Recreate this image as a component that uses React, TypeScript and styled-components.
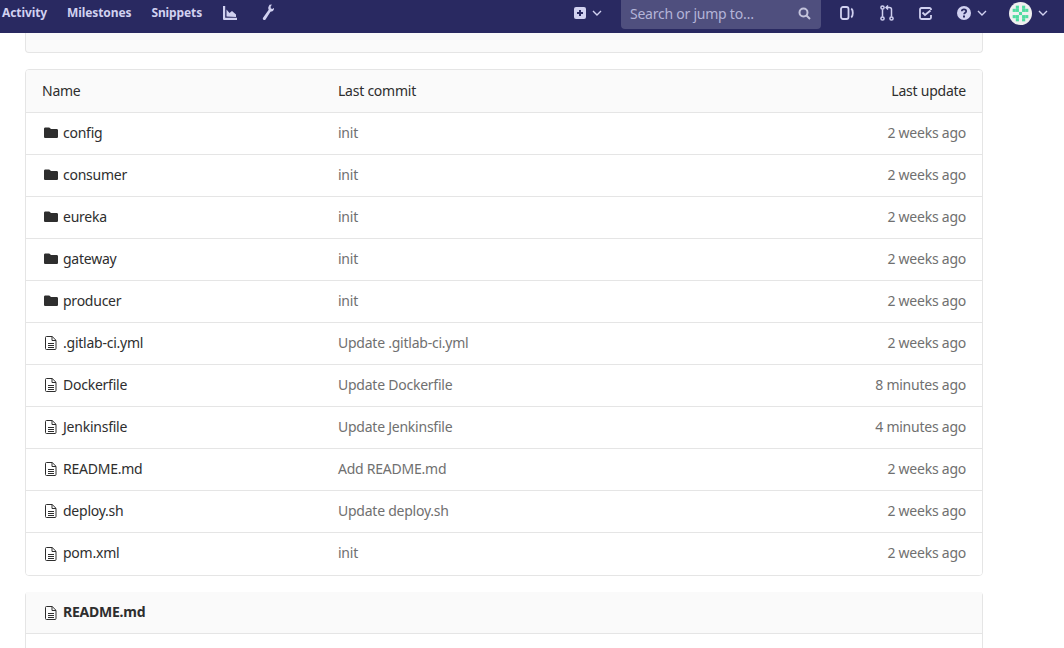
import React from "react";
import styled, { createGlobalStyle } from "styled-components";

const GlobalStyle = createGlobalStyle`
  html, body {
    margin: 0;
    padding: 0;
    background: #fff;
    overflow: hidden;
  }
  body {
    font-family: "Noto Sans", "Open Sans", sans-serif;
    font-size: 14px;
    letter-spacing: -0.24px;
    color: #2e2e2e;
  }
`;

const Page = styled.div`
  width: 1064px;
  height: 648px;
  overflow: hidden;
`;

const Navbar = styled.header`
  height: 33px;
  background: #292961;
  display: flex;
  justify-content: space-between;
  align-items: flex-start;
  padding: 0 0 0 2px;
  box-sizing: border-box;
`;

const NavGroup = styled.nav`
  display: flex;
  align-items: center;
  height: 25px;
`;

const NavLink = styled.a`
  color: #d1d1f0;
  font-size: 12px;
  font-weight: 700;
  letter-spacing: -0.1px;
  margin-right: 20px;
  line-height: 25px;
`;

const NavIcon = styled.span<{ $gap?: number; $left?: number }>`
  display: flex;
  align-items: center;
  color: #d1d1f0;
  margin-left: ${(p) => p.$left ?? 0}px;
  margin-right: ${(p) => p.$gap ?? 0}px;
`;

const RightGroup = styled.div`
  display: flex;
  align-items: flex-start;
  width: 491px;
  height: 29px;
`;

const NavRightItem = styled.div<{ $width: number; $left?: number }>`
  width: ${(p) => p.$width}px;
  height: 26px;
  padding-left: ${(p) => p.$left ?? 0}px;
  box-sizing: border-box;
  display: flex;
  align-items: center;
  color: #d1d1f0;
  gap: 6px;
`;

const Search = styled.div`
  width: 200px;
  height: 29px;
  box-sizing: border-box;
  background: #4f4f7e;
  border-radius: 0 0 4px 4px;
  display: flex;
  align-items: center;
  justify-content: space-between;
  padding: 0 10px 2px 9px;
  margin-right: 19px;
  color: #b4b4d8;
  font-size: 14px;
`;

const Content = styled.main`
  width: 958px;
  margin-left: 25px;
  display: flex;
  flex-direction: column;
`;

const TopPanel = styled.div`
  height: 20px;
  box-sizing: border-box;
  background: #fafafa;
  border: 1px solid #e5e5e5;
  border-top: 0;
  border-radius: 0 0 4px 4px;
  margin-bottom: 16px;
`;

const TreeTable = styled.div`
  border: 1px solid #e5e5e5;
  border-radius: 4px;
  overflow: hidden;
  margin-bottom: 16px;
`;

const Row = styled.div<{ $head?: boolean }>`
  display: grid;
  grid-template-columns: 296px 1fr 240px;
  align-items: center;
  height: ${(p) => (p.$head ? 43 : 42)}px;
  box-sizing: border-box;
  padding: 0 16px ${(p) => (p.$head ? 2 : 3)}px;
  background: ${(p) => (p.$head ? "#fafafa" : "#fff")};
  border-bottom: 1px solid #e5e5e5;
  &:last-child {
    border-bottom: 0;
  }
`;

const NameCell = styled.div`
  display: flex;
  align-items: center;
  gap: 5px;
  padding-left: 2px;
  color: #2e2e2e;
  svg {
    margin-top: 2px;
  }
`;

const HeadCell = styled.div<{ $right?: boolean }>`
  color: #2e2e2e;
  text-align: ${(p) => (p.$right ? "right" : "left")};
`;

const CommitCell = styled.div`
  color: #707070;
`;

const TimeCell = styled.div`
  color: #707070;
  text-align: right;
`;

const ReadmePanel = styled.section`
  border: 1px solid #e5e5e5;
  border-top: 0;
  border-bottom: 0;
  border-radius: 4px 4px 0 0;
`;

const ReadmeHead = styled.div`
  height: 42px;
  box-sizing: border-box;
  background: #fafafa;
  border-bottom: 1px solid #e5e5e5;
  display: flex;
  align-items: center;
  gap: 5px;
  padding: 0 0 2px 18px;
  font-weight: 700;
  svg {
    margin-top: 2px;
  }
`;

const ReadmeBody = styled.div`
  height: 40px;
`;

const FolderIcon = () => (
  <svg width="14" height="12" viewBox="0 0 14 12" fill="#2e2e2e">
    <path d="M1.3 0.5h3.6c.5 0 .9.2 1.2.6l.7.9h5.9c.7 0 1.3.6 1.3 1.3v6.4c0 .7-.6 1.3-1.3 1.3H1.3C.6 11 0 10.4 0 9.7V1.8C0 1.1.6.5 1.3.5z" />
  </svg>
);

const FileIcon = () => (
  <svg width="14" height="14" viewBox="0 0 14 14" fill="none" stroke="#2e2e2e">
    <path d="M1.5 1.5a1 1 0 0 1 1-1h5.700l3.800 3.800v8.200a1 1 0 0 1-1 1h-8.500a1 1 0 0 1-1-1z" strokeWidth="1" />
    <path d="M8 .8v3.700h4M4 7.500h6M4 9.500h6M4 11.500h6" strokeWidth="1" />
  </svg>
);

const ChartIcon = () => (
  <svg width="14" height="14" viewBox="0 0 14 14" fill="currentColor">
    <path d="M0 0h2.200v11.800H14V14H1a1 1 0 0 1-1-1z" />
    <path d="M3.500 10.500V3.500l3 3.500 2.500-2 4 3.500v2.500z" />
  </svg>
);

const WrenchIcon = () => (
  <svg width="13" height="17" viewBox="0 0 14 18" fill="currentColor">
    <path d="M9.200.6 8 3.200c-.4 1-.2 2 .3 2.800L2.200 14.600c-.5.8-.3 1.800.4 2.300.8.5 1.800.3 2.300-.4l5.300-8.200c1.600 0 3-.9 3.600-2.400l.6-2-2.400 1.200-1.500-.8-.1-1.700 1.400-2.200z" />
  </svg>
);

const PlusSquareIcon = () => (
  <svg width="12" height="12" viewBox="0 0 12 12">
    <rect width="12" height="12" rx="2" fill="currentColor" />
    <path d="M6 3v6M3 6h6" stroke="#292961" strokeWidth="2" />
  </svg>
);

const Chevron = () => (
  <svg width="10" height="6" viewBox="0 0 10 6" fill="none" stroke="currentColor" strokeWidth="1.4">
    <path d="M1 1l4 4 4-4" />
  </svg>
);

const SearchIcon = () => (
  <svg width="13" height="13" viewBox="0 0 13 13" fill="none" stroke="#c4c4dc" strokeWidth="2">
    <circle cx="5.500" cy="5.500" r="4" />
    <path d="M8.500 8.500l3.500 3.500" />
  </svg>
);

const SidebarIcon = () => (
  <svg width="14" height="14" viewBox="0 0 14 14" fill="none" stroke="currentColor" strokeWidth="1.8">
    <rect x="1" y="1" width="7.500" height="12" rx="2" />
    <path d="M11.300 2.500c1.100.9 1.500 2.600 1.500 4.500s-.4 3.600-1.500 4.500" />
  </svg>
);

const MergeIcon = () => (
  <svg width="14" height="16" viewBox="0 0 14 16" fill="none" stroke="currentColor" strokeWidth="1.500">
    <circle cx="2.500" cy="2.500" r="1.600" />
    <circle cx="2.500" cy="13.500" r="1.600" />
    <circle cx="11.500" cy="13.500" r="1.600" />
    <path d="M2.500 4.200v7.600M11.500 11.800V4.500a2 2 0 0 0-2-2H6.500M8 .5l-2 2 2 2" />
  </svg>
);

const TodoIcon = () => (
  <svg width="13" height="13" viewBox="0 0 13 13" fill="none" stroke="currentColor" strokeWidth="1.800">
    <path d="M12 3V2.500A1.500 1.500 0 0 0 10.500 1h-8A1.500 1.500 0 0 0 1 2.500v8A1.500 1.500 0 0 0 2.500 12h8a1.500 1.500 0 0 0 1.500-1.500V8" />
    <path d="M3.500 5.500L6 8l5.500-4.500" />
  </svg>
);

const HelpIcon = () => (
  <svg width="14" height="14" viewBox="0 0 14 14">
    <circle cx="7" cy="7" r="7" fill="currentColor" />
    <path d="M4.800 5.300c0-1.300 1-2 2.200-2s2.200.7 2.200 1.900c0 1.500-2.100 1.500-2.100 3" fill="none" stroke="#292961" strokeWidth="1.700" />
    <rect x="6" y="9.500" width="2" height="2" fill="#292961" />
  </svg>
);

// 5x5 identicon, green cells on a near-white disc
const avatarCells = ["01010", "11011", "00100", "11011", "01010"];

const AvatarIcon = () => (
  <svg width="23" height="23" viewBox="0 0 25 25">
    <circle cx="12.500" cy="12.500" r="12.500" fill="#f0f0f0" />
    {avatarCells.map((row, y) =>
      row.split("").map((cell, x) =>
        cell === "1" ? (
          <rect key={`${x}-${y}`} x={x * 3.4 + 4} y={y * 3.4 + 4} width="3.4" height="3.4" fill="#4fdca0" />
        ) : null
      )
    )}
  </svg>
);

type Entry = { name: string; commit: string; time: string; folder?: boolean };

const entries: Entry[] = [
  { name: "config", commit: "init", time: "2 weeks ago", folder: true },
  { name: "consumer", commit: "init", time: "2 weeks ago", folder: true },
  { name: "eureka", commit: "init", time: "2 weeks ago", folder: true },
  { name: "gateway", commit: "init", time: "2 weeks ago", folder: true },
  { name: "producer", commit: "init", time: "2 weeks ago", folder: true },
  { name: ".gitlab-ci.yml", commit: "Update .gitlab-ci.yml", time: "2 weeks ago" },
  { name: "Dockerfile", commit: "Update Dockerfile", time: "8 minutes ago" },
  { name: "Jenkinsfile", commit: "Update Jenkinsfile", time: "4 minutes ago" },
  { name: "README.md", commit: "Add README.md", time: "2 weeks ago" },
  { name: "deploy.sh", commit: "Update deploy.sh", time: "2 weeks ago" },
  { name: "pom.xml", commit: "init", time: "2 weeks ago" },
];

export default function App() {
  return (
    <Page>
      <GlobalStyle />
      <Navbar>
        <NavGroup>
          <NavLink>Activity</NavLink>
          <NavLink>Milestones</NavLink>
          <NavLink>Snippets</NavLink>
          <NavIcon $left={1} $gap={24}>
            <ChartIcon />
          </NavIcon>
          <NavIcon>
            <WrenchIcon />
          </NavIcon>
        </NavGroup>
        <RightGroup>
          <NavRightItem $width={48} $left={1}>
            <PlusSquareIcon />
            <Chevron />
          </NavRightItem>
          <Search>
            Search or jump to…
            <SearchIcon />
          </Search>
          <NavRightItem $width={40}>
            <SidebarIcon />
          </NavRightItem>
          <NavRightItem $width={39}>
            <MergeIcon />
          </NavRightItem>
          <NavRightItem $width={38}>
            <TodoIcon />
          </NavRightItem>
          <NavRightItem $width={52}>
            <HelpIcon />
            <Chevron />
          </NavRightItem>
          <NavRightItem $width={50}>
            <AvatarIcon />
            <Chevron />
          </NavRightItem>
        </RightGroup>
      </Navbar>
      <Content>
        <TopPanel />
        <TreeTable>
          <Row $head>
            <HeadCell>Name</HeadCell>
            <HeadCell>Last commit</HeadCell>
            <HeadCell $right>Last update</HeadCell>
          </Row>
          {entries.map((entry) => (
            <Row key={entry.name}>
              <NameCell>
                {entry.folder ? <FolderIcon /> : <FileIcon />}
                {entry.name}
              </NameCell>
              <CommitCell>{entry.commit}</CommitCell>
              <TimeCell>{entry.time}</TimeCell>
            </Row>
          ))}
        </TreeTable>
        <ReadmePanel>
          <ReadmeHead>
            <FileIcon />
            README.md
          </ReadmeHead>
          <ReadmeBody />
        </ReadmePanel>
      </Content>
    </Page>
  );
}
